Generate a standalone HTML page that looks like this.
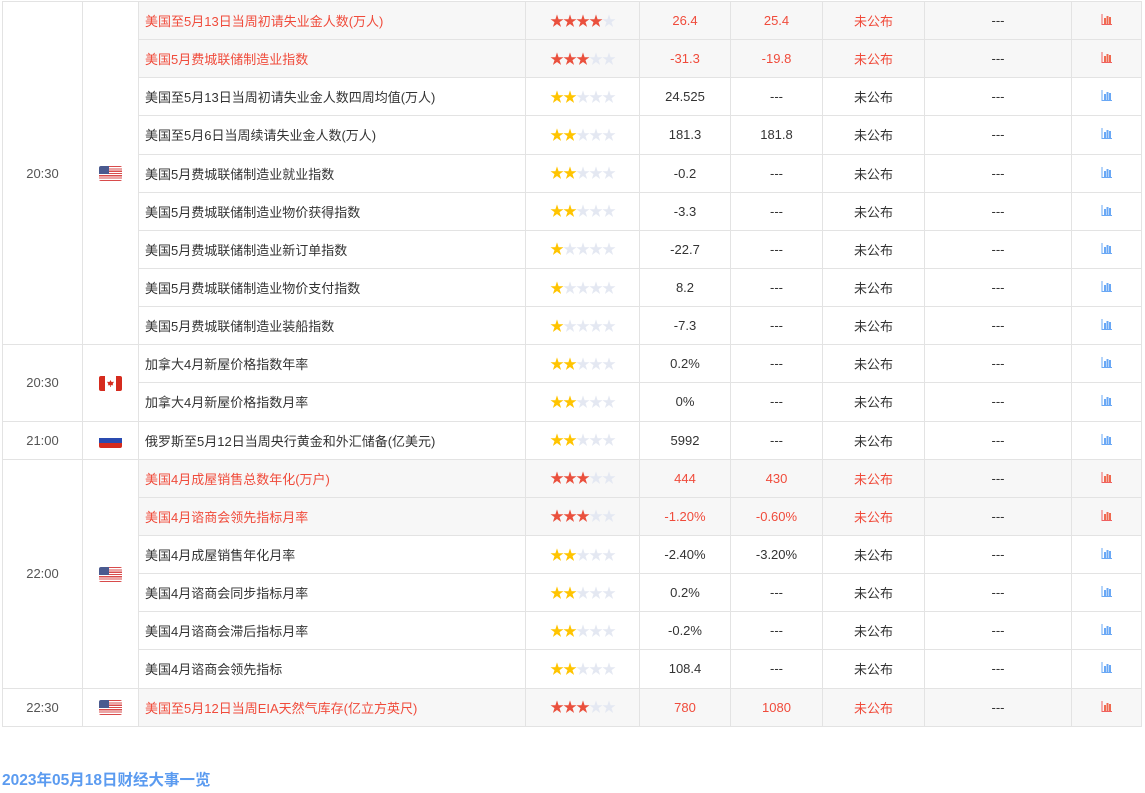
<!DOCTYPE html><html><head><meta charset="utf-8"><style>
body{margin:0;background:#fff;font-family:"Liberation Sans","Noto Sans CJK SC",sans-serif;font-size:13px;color:#333;}
table{position:absolute;left:2px;top:1px;border-collapse:collapse;table-layout:fixed;width:1140px;}
td{border:1px solid #e3e3e3;height:37.15px;padding:0;text-align:center;white-space:nowrap;overflow:hidden}
td.n{text-align:left;padding-left:6px}
td.t{color:#555;font-size:13px}
tr.h td.g{background:#f7f7f7}
tr.h td.g, tr.h td.g.n{color:#f04b3b}
tr.h td.imp{color:#333}
.s{display:inline-block;font-size:14px;letter-spacing:-1px;}
.on{color:#ffc400}.r .on{color:#ea503d}.off{color:#e4e8f2}
.flag{display:inline-block;width:23px;height:15px;border-radius:2px;vertical-align:middle;position:relative}
.us{background:linear-gradient(#4a5a8f,#4a5a8f) 0 0/10px 8px no-repeat,repeating-linear-gradient(#d84b4b 0 1.2px,#fff 1.2px 2.3px)}
.ca{background:linear-gradient(90deg,#d52b1e 0 6px,#fff 6px 17px,#d52b1e 17px)}
.ca:after{content:"";position:absolute;left:8px;top:4px;width:7px;height:7px;background:#d52b1e;clip-path:polygon(50% 0,65% 30%,100% 25%,80% 60%,90% 75%,55% 75%,55% 100%,45% 100%,45% 75%,10% 75%,20% 60%,0 25%,35% 30%)}
.ru{background:linear-gradient(#fff 0 5px,#2a4bb0 5px 10px,#d52b1e 10px)}
h3{position:absolute;left:2px;top:768px;margin:0;font-size:15.5px;color:#5b9bf0;font-weight:bold;font-family:"Liberation Sans","Noto Sans CJK SC",sans-serif}
</style></head><body>
<table>
<colgroup><col style="width:80px"><col style="width:56px"><col style="width:387px"><col style="width:114px"><col style="width:91px"><col style="width:92px"><col style="width:102px"><col style="width:147px"><col style="width:70px"></colgroup>
<tbody>
<tr class="h"><td class="t" rowspan="9">20:30</td><td rowspan="9"><span class="flag us"></span></td><td class="g n">美国至5月13日当周初请失业金人数(万人)</td><td class="g"><span class="s r"><span class="on">★★★★</span><span class="off">★</span></span></td><td class="g">26.4</td><td class="g">25.4</td><td class="g">未公布</td><td class="g imp">---</td><td class="g"><svg width="11" height="11" viewBox="0 0 11 11"><path d="M1 0V10.5H11" stroke="#f06060" fill="none"/><rect x="3" y="4" width="2" height="6" fill="#f06a50"/><rect x="5.5" y="2" width="2" height="8" fill="#f06a50"/><rect x="8" y="3" width="2" height="7" fill="#f06a50"/></svg></td></tr>
<tr class="h"><td class="g n">美国5月费城联储制造业指数</td><td class="g"><span class="s r"><span class="on">★★★</span><span class="off">★★</span></span></td><td class="g">-31.3</td><td class="g">-19.8</td><td class="g">未公布</td><td class="g imp">---</td><td class="g"><svg width="11" height="11" viewBox="0 0 11 11"><path d="M1 0V10.5H11" stroke="#f06060" fill="none"/><rect x="3" y="4" width="2" height="6" fill="#f06a50"/><rect x="5.5" y="2" width="2" height="8" fill="#f06a50"/><rect x="8" y="3" width="2" height="7" fill="#f06a50"/></svg></td></tr>
<tr><td class="n">美国至5月13日当周初请失业金人数四周均值(万人)</td><td><span class="s"><span class="on">★★</span><span class="off">★★★</span></span></td><td>24.525</td><td>---</td><td>未公布</td><td>---</td><td><svg width="11" height="11" viewBox="0 0 11 11"><path d="M1 0V10.5H11" stroke="#6aa8f5" fill="none"/><rect x="3" y="4" width="2" height="6" fill="#6aa8f5"/><rect x="5.5" y="2" width="2" height="8" fill="#6aa8f5"/><rect x="8" y="3" width="2" height="7" fill="#6aa8f5"/></svg></td></tr>
<tr><td class="n">美国至5月6日当周续请失业金人数(万人)</td><td><span class="s"><span class="on">★★</span><span class="off">★★★</span></span></td><td>181.3</td><td>181.8</td><td>未公布</td><td>---</td><td><svg width="11" height="11" viewBox="0 0 11 11"><path d="M1 0V10.5H11" stroke="#6aa8f5" fill="none"/><rect x="3" y="4" width="2" height="6" fill="#6aa8f5"/><rect x="5.5" y="2" width="2" height="8" fill="#6aa8f5"/><rect x="8" y="3" width="2" height="7" fill="#6aa8f5"/></svg></td></tr>
<tr><td class="n">美国5月费城联储制造业就业指数</td><td><span class="s"><span class="on">★★</span><span class="off">★★★</span></span></td><td>-0.2</td><td>---</td><td>未公布</td><td>---</td><td><svg width="11" height="11" viewBox="0 0 11 11"><path d="M1 0V10.5H11" stroke="#6aa8f5" fill="none"/><rect x="3" y="4" width="2" height="6" fill="#6aa8f5"/><rect x="5.5" y="2" width="2" height="8" fill="#6aa8f5"/><rect x="8" y="3" width="2" height="7" fill="#6aa8f5"/></svg></td></tr>
<tr><td class="n">美国5月费城联储制造业物价获得指数</td><td><span class="s"><span class="on">★★</span><span class="off">★★★</span></span></td><td>-3.3</td><td>---</td><td>未公布</td><td>---</td><td><svg width="11" height="11" viewBox="0 0 11 11"><path d="M1 0V10.5H11" stroke="#6aa8f5" fill="none"/><rect x="3" y="4" width="2" height="6" fill="#6aa8f5"/><rect x="5.5" y="2" width="2" height="8" fill="#6aa8f5"/><rect x="8" y="3" width="2" height="7" fill="#6aa8f5"/></svg></td></tr>
<tr><td class="n">美国5月费城联储制造业新订单指数</td><td><span class="s"><span class="on">★</span><span class="off">★★★★</span></span></td><td>-22.7</td><td>---</td><td>未公布</td><td>---</td><td><svg width="11" height="11" viewBox="0 0 11 11"><path d="M1 0V10.5H11" stroke="#6aa8f5" fill="none"/><rect x="3" y="4" width="2" height="6" fill="#6aa8f5"/><rect x="5.5" y="2" width="2" height="8" fill="#6aa8f5"/><rect x="8" y="3" width="2" height="7" fill="#6aa8f5"/></svg></td></tr>
<tr><td class="n">美国5月费城联储制造业物价支付指数</td><td><span class="s"><span class="on">★</span><span class="off">★★★★</span></span></td><td>8.2</td><td>---</td><td>未公布</td><td>---</td><td><svg width="11" height="11" viewBox="0 0 11 11"><path d="M1 0V10.5H11" stroke="#6aa8f5" fill="none"/><rect x="3" y="4" width="2" height="6" fill="#6aa8f5"/><rect x="5.5" y="2" width="2" height="8" fill="#6aa8f5"/><rect x="8" y="3" width="2" height="7" fill="#6aa8f5"/></svg></td></tr>
<tr><td class="n">美国5月费城联储制造业装船指数</td><td><span class="s"><span class="on">★</span><span class="off">★★★★</span></span></td><td>-7.3</td><td>---</td><td>未公布</td><td>---</td><td><svg width="11" height="11" viewBox="0 0 11 11"><path d="M1 0V10.5H11" stroke="#6aa8f5" fill="none"/><rect x="3" y="4" width="2" height="6" fill="#6aa8f5"/><rect x="5.5" y="2" width="2" height="8" fill="#6aa8f5"/><rect x="8" y="3" width="2" height="7" fill="#6aa8f5"/></svg></td></tr>
<tr><td class="t" rowspan="2">20:30</td><td rowspan="2"><span class="flag ca"></span></td><td class="n">加拿大4月新屋价格指数年率</td><td><span class="s"><span class="on">★★</span><span class="off">★★★</span></span></td><td>0.2%</td><td>---</td><td>未公布</td><td>---</td><td><svg width="11" height="11" viewBox="0 0 11 11"><path d="M1 0V10.5H11" stroke="#6aa8f5" fill="none"/><rect x="3" y="4" width="2" height="6" fill="#6aa8f5"/><rect x="5.5" y="2" width="2" height="8" fill="#6aa8f5"/><rect x="8" y="3" width="2" height="7" fill="#6aa8f5"/></svg></td></tr>
<tr><td class="n">加拿大4月新屋价格指数月率</td><td><span class="s"><span class="on">★★</span><span class="off">★★★</span></span></td><td>0%</td><td>---</td><td>未公布</td><td>---</td><td><svg width="11" height="11" viewBox="0 0 11 11"><path d="M1 0V10.5H11" stroke="#6aa8f5" fill="none"/><rect x="3" y="4" width="2" height="6" fill="#6aa8f5"/><rect x="5.5" y="2" width="2" height="8" fill="#6aa8f5"/><rect x="8" y="3" width="2" height="7" fill="#6aa8f5"/></svg></td></tr>
<tr><td class="t">21:00</td><td><span class="flag ru"></span></td><td class="n">俄罗斯至5月12日当周央行黄金和外汇储备(亿美元)</td><td><span class="s"><span class="on">★★</span><span class="off">★★★</span></span></td><td>5992</td><td>---</td><td>未公布</td><td>---</td><td><svg width="11" height="11" viewBox="0 0 11 11"><path d="M1 0V10.5H11" stroke="#6aa8f5" fill="none"/><rect x="3" y="4" width="2" height="6" fill="#6aa8f5"/><rect x="5.5" y="2" width="2" height="8" fill="#6aa8f5"/><rect x="8" y="3" width="2" height="7" fill="#6aa8f5"/></svg></td></tr>
<tr class="h"><td class="t" rowspan="6">22:00</td><td rowspan="6"><span class="flag us"></span></td><td class="g n">美国4月成屋销售总数年化(万户)</td><td class="g"><span class="s r"><span class="on">★★★</span><span class="off">★★</span></span></td><td class="g">444</td><td class="g">430</td><td class="g">未公布</td><td class="g imp">---</td><td class="g"><svg width="11" height="11" viewBox="0 0 11 11"><path d="M1 0V10.5H11" stroke="#f06060" fill="none"/><rect x="3" y="4" width="2" height="6" fill="#f06a50"/><rect x="5.5" y="2" width="2" height="8" fill="#f06a50"/><rect x="8" y="3" width="2" height="7" fill="#f06a50"/></svg></td></tr>
<tr class="h"><td class="g n">美国4月谘商会领先指标月率</td><td class="g"><span class="s r"><span class="on">★★★</span><span class="off">★★</span></span></td><td class="g">-1.20%</td><td class="g">-0.60%</td><td class="g">未公布</td><td class="g imp">---</td><td class="g"><svg width="11" height="11" viewBox="0 0 11 11"><path d="M1 0V10.5H11" stroke="#f06060" fill="none"/><rect x="3" y="4" width="2" height="6" fill="#f06a50"/><rect x="5.5" y="2" width="2" height="8" fill="#f06a50"/><rect x="8" y="3" width="2" height="7" fill="#f06a50"/></svg></td></tr>
<tr><td class="n">美国4月成屋销售年化月率</td><td><span class="s"><span class="on">★★</span><span class="off">★★★</span></span></td><td>-2.40%</td><td>-3.20%</td><td>未公布</td><td>---</td><td><svg width="11" height="11" viewBox="0 0 11 11"><path d="M1 0V10.5H11" stroke="#6aa8f5" fill="none"/><rect x="3" y="4" width="2" height="6" fill="#6aa8f5"/><rect x="5.5" y="2" width="2" height="8" fill="#6aa8f5"/><rect x="8" y="3" width="2" height="7" fill="#6aa8f5"/></svg></td></tr>
<tr><td class="n">美国4月谘商会同步指标月率</td><td><span class="s"><span class="on">★★</span><span class="off">★★★</span></span></td><td>0.2%</td><td>---</td><td>未公布</td><td>---</td><td><svg width="11" height="11" viewBox="0 0 11 11"><path d="M1 0V10.5H11" stroke="#6aa8f5" fill="none"/><rect x="3" y="4" width="2" height="6" fill="#6aa8f5"/><rect x="5.5" y="2" width="2" height="8" fill="#6aa8f5"/><rect x="8" y="3" width="2" height="7" fill="#6aa8f5"/></svg></td></tr>
<tr><td class="n">美国4月谘商会滞后指标月率</td><td><span class="s"><span class="on">★★</span><span class="off">★★★</span></span></td><td>-0.2%</td><td>---</td><td>未公布</td><td>---</td><td><svg width="11" height="11" viewBox="0 0 11 11"><path d="M1 0V10.5H11" stroke="#6aa8f5" fill="none"/><rect x="3" y="4" width="2" height="6" fill="#6aa8f5"/><rect x="5.5" y="2" width="2" height="8" fill="#6aa8f5"/><rect x="8" y="3" width="2" height="7" fill="#6aa8f5"/></svg></td></tr>
<tr><td class="n">美国4月谘商会领先指标</td><td><span class="s"><span class="on">★★</span><span class="off">★★★</span></span></td><td>108.4</td><td>---</td><td>未公布</td><td>---</td><td><svg width="11" height="11" viewBox="0 0 11 11"><path d="M1 0V10.5H11" stroke="#6aa8f5" fill="none"/><rect x="3" y="4" width="2" height="6" fill="#6aa8f5"/><rect x="5.5" y="2" width="2" height="8" fill="#6aa8f5"/><rect x="8" y="3" width="2" height="7" fill="#6aa8f5"/></svg></td></tr>
<tr class="h"><td class="t">22:30</td><td><span class="flag us"></span></td><td class="g n">美国至5月12日当周EIA天然气库存(亿立方英尺)</td><td class="g"><span class="s r"><span class="on">★★★</span><span class="off">★★</span></span></td><td class="g">780</td><td class="g">1080</td><td class="g">未公布</td><td class="g imp">---</td><td class="g"><svg width="11" height="11" viewBox="0 0 11 11"><path d="M1 0V10.5H11" stroke="#f06060" fill="none"/><rect x="3" y="4" width="2" height="6" fill="#f06a50"/><rect x="5.5" y="2" width="2" height="8" fill="#f06a50"/><rect x="8" y="3" width="2" height="7" fill="#f06a50"/></svg></td></tr>
</tbody></table>
<h3>2023年05月18日财经大事一览</h3>
</body></html>
